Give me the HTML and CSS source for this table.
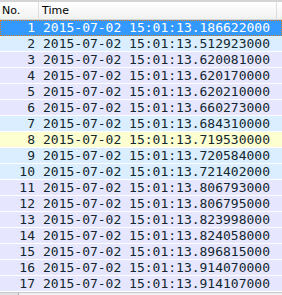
FILE: index.html
```html
<!DOCTYPE html>
<html>
<head>
<meta charset="utf-8">
<link rel="stylesheet" href="styles.css">
</head>
<body>
<div class="topstrip"></div>
<div class="list">
  <div class="header">
    <div class="hcell no">No.</div>
    <div class="hcell time">Time</div>
    <div class="hfill"></div>
  </div>
  <div class="row sel"><span class="num">1</span><span class="t">2015-07-02 15:01:13.186622000</span></div>
  <div class="row udp"><span class="num">2</span><span class="t">2015-07-02 15:01:13.512923000</span></div>
  <div class="row tcp"><span class="num">3</span><span class="t">2015-07-02 15:01:13.620081000</span></div>
  <div class="row tcp"><span class="num">4</span><span class="t">2015-07-02 15:01:13.620170000</span></div>
  <div class="row tcp"><span class="num">5</span><span class="t">2015-07-02 15:01:13.620210000</span></div>
  <div class="row tcp"><span class="num">6</span><span class="t">2015-07-02 15:01:13.660273000</span></div>
  <div class="row udp"><span class="num">7</span><span class="t">2015-07-02 15:01:13.684310000</span></div>
  <div class="row smb"><span class="num">8</span><span class="t">2015-07-02 15:01:13.719530000</span></div>
  <div class="row udp"><span class="num">9</span><span class="t">2015-07-02 15:01:13.720584000</span></div>
  <div class="row udp"><span class="num">10</span><span class="t">2015-07-02 15:01:13.721402000</span></div>
  <div class="row tcp"><span class="num">11</span><span class="t">2015-07-02 15:01:13.806793000</span></div>
  <div class="row tcp"><span class="num">12</span><span class="t">2015-07-02 15:01:13.806795000</span></div>
  <div class="row tcp"><span class="num">13</span><span class="t">2015-07-02 15:01:13.823998000</span></div>
  <div class="row tcp"><span class="num">14</span><span class="t">2015-07-02 15:01:13.824058000</span></div>
  <div class="row tcp"><span class="num">15</span><span class="t">2015-07-02 15:01:13.896815000</span></div>
  <div class="row tcp"><span class="num">16</span><span class="t">2015-07-02 15:01:13.914070000</span></div>
  <div class="row tcp"><span class="num">17</span><span class="t">2015-07-02 15:01:13.914107000</span></div>
  <div class="hscroll"><div class="thumbgap"></div><div class="thumb"></div></div>
</div>
</body>
</html>
```
FILE: styles.css
```css
html, body {
  margin: 0;
  padding: 0;
  background: #ffffff;
  overflow: hidden;
}
.topstrip {
  height: 2px;
  background: #d4d4d4;
}
.list {
  display: flex;
  flex-direction: column;
}
.header {
  display: flex;
  height: 18px;
  box-sizing: border-box;
  border-bottom: 1px solid #d5d5d5;
  background: linear-gradient(#ffffff, #f2f2f2);
  font-family: "DejaVu Sans", sans-serif;
  font-size: 11px;
  color: #000;
}
.hcell {
  display: flex;
  align-items: center;
  box-sizing: border-box;
  border-right: 1px solid #dedede;
}
.hcell.no {
  width: 39px;
  padding-left: 2px;
}
.hcell.time {
  width: 238px;
  padding-left: 3px;
}
.hfill {
  flex: 1;
}
.row {
  display: flex;
  height: 16px;
  box-sizing: border-box;
  border-bottom: 1px solid #ffffff;
  font-family: "DejaVu Sans Mono", monospace;
  font-size: 13px;
  line-height: 15px;
  color: #12272e;
  white-space: pre;
}
.row .num {
  width: 35px;
  text-align: right;
}
.row .t {
  padding-left: 8px;
}
.udp { background: #daeeff; }
.tcp { background: #e7e6ff; }
.smb { background: #feffd0; }
.sel {
  background: #3399ff;
  color: #ffffff;
  border: 1px dotted #e07a1a;
  line-height: 14px;
}
.sel .num { width: 34px; }
.sel .t { padding-left: 8px; }
.hscroll {
  display: flex;
  height: 3px;
  border-top: 1px solid #c8c8c8;
  background: #f0f0f0;
}
.thumbgap {
  width: 18px;
  background: #e2e2e2;
  border-right: 1px solid #a8a8a8;
}
.thumb {
  flex: 1;
}
```
